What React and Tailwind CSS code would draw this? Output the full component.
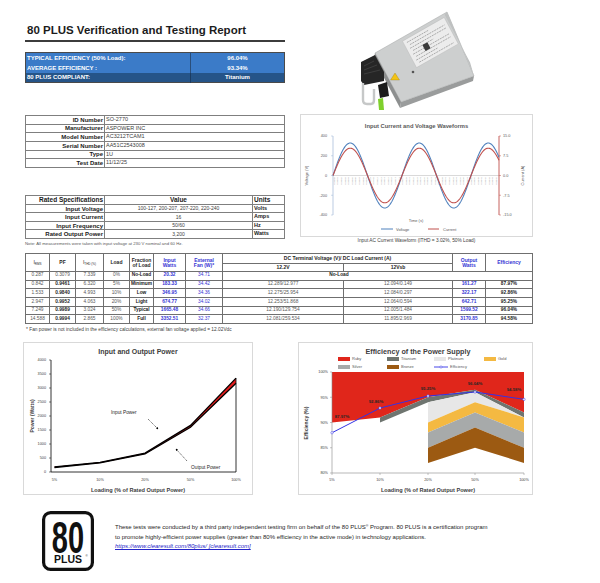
import React from "react";

const FONT = "Liberation Sans, Arial, sans-serif";

function sine(x0, x1, y0, amp, period) {
  const pts = [];
  for (let x = x0; x <= x1 + 0.01; x += 0.5) {
    const y = y0 - amp * Math.sin((2 * Math.PI * (x - x0)) / period);
    pts.push(`${x.toFixed(1)},${y.toFixed(2)}`);
  }
  return "M" + pts.join(" L");
}

// point on the PSU top face: corner + u along the length + v across the width
const face = (u, v) => [15 + u * 72 + v * 26, 43 - u * 41 + v * 49];
const fp = (u, v) => face(u, v).map((n) => n.toFixed(1)).join(",");

const PsuPicture = () => (
  <svg width="116" height="100" viewBox="0 0 116 100" className="block">
    <polygon points="41,92 114,66 113,71 40,98" fill="#9a9c9c" />
    <polygon points="15,43 87,2 114,66 41,92" fill="#cdcfcf" stroke="#a3a5a5" strokeWidth="0.5" />
    <polygon points={`${fp(0.96, 0.02)} 87,2 114,66 ${fp(0.96, 1)}`} fill="#bfc1c1" />
    <polygon points={`${fp(0.36, 0.06)} ${fp(0.94, 0.06)} ${fp(0.94, 0.6)} ${fp(0.36, 0.6)}`} fill="#ececec" stroke="#b3b3b3" strokeWidth="0.4" />
    {[0.12, 0.18, 0.24, 0.3, 0.36, 0.42, 0.48, 0.54].map((v, i) => (
      <line
        key={v}
        x1={face(i % 2 ? 0.42 : 0.4, v)[0]}
        y1={face(i % 2 ? 0.42 : 0.4, v)[1]}
        x2={face(i % 3 ? 0.9 : 0.7, v)[0]}
        y2={face(i % 3 ? 0.9 : 0.7, v)[1]}
        stroke="#8e8e8e"
        strokeWidth="0.7"
        strokeDasharray="2,0.8"
      />
    ))}
    <polygon points={`${fp(0.55, 0.3)} ${fp(0.62, 0.3)} ${fp(0.62, 0.42)} ${fp(0.55, 0.42)}`} fill="#3a3a3a" />
    <polygon points="15,43 41,92 40,98 14,49" fill="#8d8f8f" />
    <polygon points="1,52 15,45 24,62 24,71 4,75 1,71" fill="#262626" />
    <line x1="4" y1="56" x2="14" y2="51" stroke="#555" strokeWidth="0.5" />
    <line x1="4" y1="60" x2="17" y2="55" stroke="#555" strokeWidth="0.5" />
    <line x1="4" y1="64" x2="20" y2="60" stroke="#555" strokeWidth="0.5" />
    <path d="M3,73 L3,90 Q3,94 7,94 L11,94 Q14,94 14,90 L14,79" fill="none" stroke="#c6c8c8" strokeWidth="2.4" />
    <polygon points="18,75 27,72 29,86 20,88" fill="#1c1c1c" />
    <polygon points="18,89 23,88 24,100 19,100" fill="#7fd02c" />
    <polygon points="35,63 39.5,70 30.5,70" fill="#f3c316" stroke="#8a6d00" strokeWidth="0.3" />
    <circle cx="53" cy="62" r="1.3" fill="#555" />
  </svg>
);

const WaveChart = () => {
  const ticks = Array.from({ length: 46 }, (_, i) => 33.8 + i * 3.6);
  const left = ["400", "200", "0", "-200", "-400"];
  const right = ["15.0", "7.5", "0.0", "-7.5", "-15.0"];
  return (
    <svg width="231" height="121" className="block" fontFamily={FONT}>
      <text x="115.5" y="13" textAnchor="middle" fontSize="5.8" fontWeight="700" fill="#595959">
        Input Current and Voltage Waveforms
      </text>
      {left.map((t, i) => (
        <text key={t} x="26" y={21 + i * 19.75 + 1.4} textAnchor="end" fontSize="3.8" fill="#595959">{t}</text>
      ))}
      {right.map((t, i) => (
        <text key={t} x="202" y={21 + i * 19.75 + 1.4} fontSize="3.8" fill="#595959">{t}</text>
      ))}
      <text transform="translate(7,60.5) rotate(-90)" textAnchor="middle" fontSize="4" fill="#595959">Voltage (V)</text>
      <text transform="translate(223,60.5) rotate(-90)" textAnchor="middle" fontSize="4" fill="#595959">Current (A)</text>
      {ticks.map((t, i) => (
        <text key={i} transform={`translate(${t},62) rotate(-90)`} textAnchor="end" fontSize="2.5" fill="#a6a6a6">
          {`0.0${String(i).padStart(3, "0")}`}
        </text>
      ))}
      <line x1="32" y1="60.5" x2="198" y2="60.5" stroke="#bfbfbf" strokeWidth="0.6" />
      <line x1="32" y1="21" x2="32" y2="100" stroke="#9db6d6" strokeWidth="0.7" />
      <line x1="198" y1="21" x2="198" y2="100" stroke="#c0504d" strokeWidth="0.9" />
      {[0, 1, 2, 3, 4].map((i) => (
        <g key={i}>
          <line x1="30" y1={21 + i * 19.75} x2="32" y2={21 + i * 19.75} stroke="#9db6d6" strokeWidth="0.5" />
          <line x1="198" y1={21 + i * 19.75} x2="200" y2={21 + i * 19.75} stroke="#c0504d" strokeWidth="0.5" />
        </g>
      ))}
      <path d={sine(32, 198, 60.5, 32.5, 69)} fill="none" stroke="#4f81bd" strokeWidth="1.1" />
      <path d={sine(32, 198, 60.5, 27.3, 69)} fill="none" stroke="#c0504d" strokeWidth="1.1" />
      <text x="115" y="107" textAnchor="middle" fontSize="4" fill="#595959">Time (s)</text>
      <line x1="80" y1="114" x2="92" y2="114" stroke="#4f81bd" strokeWidth="1" />
      <text x="95" y="115.5" fontSize="4" fill="#595959">Voltage</text>
      <line x1="127" y1="114" x2="138" y2="114" stroke="#c0504d" strokeWidth="1" />
      <text x="142" y="115.5" fontSize="4" fill="#595959">Current</text>
    </svg>
  );
};

const PowerChart = () => {
  const xs = [30.5, 76, 121, 166.5, 212];
  const inp = [183.33, 346.95, 674.77, 1665.48, 3352.51];
  const out = [161.27, 322.17, 642.71, 1599.52, 3170.85];
  const y = (v) => 129 - v * 0.028;
  const line = (arr) => arr.map((v, i) => `${xs[i]},${y(v).toFixed(2)}`).join(" ");
  const band = line(inp) + " " + [...out].reverse().map((v, i) => `${xs[4 - i]},${y(v).toFixed(2)}`).join(" ");
  const yTicks = [0, 500, 1000, 1500, 2000, 2500, 3000, 3500, 4000];
  const labels = ["5%", "10%", "20%", "50%", "100%"];
  return (
    <svg width="228" height="151" className="block" fontFamily={FONT}>
      <defs>
        <marker id="ah" markerWidth="4" markerHeight="4" refX="3" refY="2" orient="auto">
          <path d="M0,0 L4,2 L0,4 z" fill="#000" />
        </marker>
      </defs>
      <text x="114" y="11" textAnchor="middle" fontSize="7" fontWeight="700" fill="#404040">Input and Output Power</text>
      {yTicks.map((v) => (
        <g key={v}>
          <text x="22" y={y(v) + 1.3} textAnchor="end" fontSize="3.8" fill="#404040">{v}</text>
          <line x1="25" y1={y(v)} x2="27" y2={y(v)} stroke="#000" strokeWidth="0.5" />
        </g>
      ))}
      {labels.map((l, i) => (
        <text key={l} x={xs[i]} y="137.5" textAnchor="middle" fontSize="3.8" fill="#404040">{l}</text>
      ))}
      <polygon points={band} fill="#e31d1d" />
      <polyline points={line(inp)} fill="none" stroke="#000" strokeWidth="1.3" />
      <polyline points={line(out)} fill="none" stroke="#000" strokeWidth="1.3" />
      <line x1="212" y1={y(3352.51)} x2="212" y2="129" stroke="#000" strokeWidth="0.8" />
      <line x1="27" y1="17" x2="27" y2="129" stroke="#000" strokeWidth="0.8" />
      <line x1="27" y1="129" x2="212" y2="129" stroke="#000" strokeWidth="0.8" />
      <text x="87" y="71" fontSize="4.8" fill="#262626">Input Power</text>
      <line x1="124" y1="76" x2="134" y2="86" stroke="#000" strokeWidth="0.6" strokeDasharray="1.2,0.8" markerEnd="url(#ah)" />
      <text x="167" y="126" fontSize="4.8" fill="#262626">Output Power</text>
      <line x1="163" y1="118" x2="152" y2="106" stroke="#000" strokeWidth="0.6" strokeDasharray="1.2,0.8" markerEnd="url(#ah)" />
      <text x="114" y="149" textAnchor="middle" fontSize="5.6" fontWeight="700" fill="#404040">
        Loading (% of Rated Output Power)
      </text>
      <text transform="translate(10,73) rotate(-90)" textAnchor="middle" fontSize="5" fontWeight="700" fill="#404040">
        Power (Watts)
      </text>
    </svg>
  );
};

const EffChart = () => {
  const xs = [33, 81, 129, 176, 225];
  const yOf = (p) => 130 - (p - 80) * 5.05;
  const poly = (top, bottom) =>
    [...top, ...[...bottom].reverse()].map(([i, p]) => `${xs[i]},${yOf(p).toFixed(2)}`).join(" ");
  const eff = [87.97, 92.86, 95.25, 96.04, 94.58];
  const effLabels = [
    ["87.97%", 43, 75],
    ["92.86%", 77, 60],
    ["95.25%", 129, 47],
    ["96.04%", 176, 42],
    ["94.58%", 215, 48],
  ];
  const legend = [
    ["Ruby", "#e0261b", 39, 16],
    ["Titanium", "#6f7570", 88, 16],
    ["Platinum", "#e7e7e7", 135, 16],
    ["Gold", "#f4b942", 185, 16],
    ["Silver", "#a7aaaa", 39, 24],
    ["Bronze", "#9c5a12", 88, 24],
  ];
  return (
    <svg width="233" height="151" className="block" fontFamily={FONT}>
      <text x="119" y="11" textAnchor="middle" fontSize="7.2" fontWeight="700" fill="#404040">
        Efficiency of the Power Supply
      </text>
      {legend.map(([n, c, x, y]) => (
        <g key={n}>
          <rect x={x} y={y - 2} width="12" height="4" fill={c} />
          <text x={x + 14} y={y + 1.4} fontSize="4" fill="#595959">{n}</text>
        </g>
      ))}
      <line x1="135" y1="24" x2="149" y2="24" stroke="#3333e6" strokeWidth="0.9" />
      <circle cx="142" cy="24" r="1.1" fill="#fff" stroke="#3333e6" strokeWidth="0.5" />
      <text x="151" y="25.4" fontSize="4" fill="#595959">Efficiency</text>

      <polygon
        points={poly([[0, 100], [1, 100], [2, 100], [3, 100], [4, 100]], [[0, 90], [1, 91], [2, 95], [3, 96.5], [4, 92]])}
        fill="#e0261b"
      />
      <polygon points={poly([[1, 91], [2, 95], [3, 96.5], [4, 92]], [[1, 90], [2, 94], [3, 96], [4, 91]])} fill="#6f7570" />
      <polygon points={poly([[2, 94], [3, 96], [4, 91]], [[2, 90], [3, 94], [4, 91]])} fill="#e7e7e7" />
      <polygon points={poly([[2, 90], [3, 94], [4, 91]], [[2, 88], [3, 92], [4, 88]])} fill="#f4b942" />
      <polygon points={poly([[2, 88], [3, 92], [4, 88]], [[2, 85], [3, 89], [4, 85]])} fill="#a7aaaa" />
      <polygon points={poly([[2, 85], [3, 89], [4, 85]], [[2, 82], [3, 85], [4, 82]])} fill="#9c5a12" />

      {[100, 95, 90, 85, 80].map((p) => (
        <g key={p}>
          <text x="29" y={yOf(p) + 1.3} textAnchor="end" fontSize="3.8" fill="#404040">{p}%</text>
          <line x1="31" y1={yOf(p)} x2="33" y2={yOf(p)} stroke="#868686" strokeWidth="0.5" />
        </g>
      ))}
      <line x1="33" y1="29" x2="33" y2="130" stroke="#868686" strokeWidth="0.6" />
      <line x1="33" y1="130" x2="225" y2="130" stroke="#868686" strokeWidth="0.6" />
      {["5%", "10%", "20%", "50%", "100%"].map((l, i) => (
        <g key={l}>
          <line x1={xs[i]} y1="130" x2={xs[i]} y2="132" stroke="#868686" strokeWidth="0.5" />
          <text x={xs[i]} y="138" textAnchor="middle" fontSize="3.8" fill="#404040">{l}</text>
        </g>
      ))}
      <polyline points={eff.map((p, i) => `${xs[i]},${yOf(p).toFixed(2)}`).join(" ")} fill="none" stroke="#3333e6" strokeWidth="1" />
      {eff.map((p, i) => (
        <circle key={i} cx={xs[i]} cy={yOf(p)} r="1.2" fill="#fff" stroke="#3333e6" strokeWidth="0.5" />
      ))}
      {effLabels.map(([t, x, y]) => (
        <text key={t} x={x} y={y} textAnchor="middle" fontSize="4.3" fontWeight="700" fill="#262626">{t}</text>
      ))}
      <text x="129" y="149" textAnchor="middle" fontSize="5.6" fontWeight="700" fill="#404040">
        Loading (% of Rated Output Power)
      </text>
      <text transform="translate(9,80) rotate(-90)" textAnchor="middle" fontSize="5" fontWeight="700" fill="#404040">
        Efficiency (%)
      </text>
    </svg>
  );
};

const Logo80 = () => (
  <svg width="52" height="60" viewBox="0 0 52 60" className="block" fontFamily={FONT}>
    <rect x="1.6" y="1.6" width="48.8" height="56.8" rx="7" fill="#fff" stroke="#111" strokeWidth="3.2" />
    <text transform="translate(26,42) scale(0.66,1)" textAnchor="middle" fontSize="44" fontWeight="700" fill="#111">80</text>
    <text x="26" y="52" textAnchor="middle" fontSize="10.5" fontWeight="700" fill="#111">PLUS</text>
    <text x="43.5" y="45.5" fontSize="3" fill="#111">®</text>
  </svg>
);

const idRows = [
  ["ID Number", "SO-2770"],
  ["Manufacturer", "ASPOWER INC"],
  ["Model Number", "AC3212TCAM1"],
  ["Serial Number", "AA51C2543008"],
  ["Type", "1U"],
  ["Test Date", "11/12/25"],
];

const specRows = [
  ["Input Voltage", "100-127, 200-207, 207-220, 220-240", "Volts"],
  ["Input Current", "16", "Amps"],
  ["Input Frequency", "50/60", "Hz"],
  ["Rated Output Power", "3,200", "Watts"],
];

const dataRows = [
  ["0.842", "0.9461", "6.320", "5%", "Minimum", "183.33", "34.42", "12.289/12.977", "12.094/0.149", "161.27", "87.97%"],
  ["1.533", "0.9840", "4.993", "10%", "Low", "346.95", "34.36", "12.275/25.954", "12.084/0.297", "322.17", "92.86%"],
  ["2.947", "0.9952", "4.063", "20%", "Light", "674.77", "34.02", "12.253/51.868", "12.064/0.594", "642.71", "95.25%"],
  ["7.249", "0.9989", "3.024", "50%", "Typical", "1665.48", "34.66", "12.190/129.754", "12.005/1.484", "1599.52", "96.04%"],
  ["14.588", "0.9994", "2.865", "100%", "Full", "3352.51", "32.37", "12.081/259.534", "11.895/2.969", "3170.85", "94.58%"],
];

const td = "border border-[#6f6f6f] leading-none text-center px-[1px]";

export default function App() {
  return (
    <div className="w-[600px] h-[583px] overflow-hidden bg-white text-black font-['Liberation_Sans',Arial,sans-serif]">
      {/* header */}
      <div className="flex h-[112px]">
        <div className="ml-[25px] w-[260px] pt-[23px]">
          <h1 className="pl-[2px] text-[11.5px] font-bold leading-[14px] text-[#1c1c1c]">
            80 PLUS Verification and Testing Report
          </h1>
          <div className="mt-[3px] h-[2px] bg-[#3c3c3c]" />
          <table className="mt-[10px] w-full table-fixed border-collapse border border-[#4a4a4a] text-[6px] font-bold text-white">
            <colgroup>
              <col className="w-[165px]" />
              <col />
            </colgroup>
            <tbody>
              <tr className="h-[10px] bg-[#3b7bc8]">
                <td className="leading-none pl-[1px]">TYPICAL EFFICIENCY (50% Load):</td>
                <td className="border-l border-[#2a4e7a] text-center leading-none">96.04%</td>
              </tr>
              <tr className="h-[10px] bg-[#3b7bc8]">
                <td className="leading-none pl-[1px]">AVERAGE EFFICIENCY :</td>
                <td className="border-l border-[#2a4e7a] text-center leading-none">93.34%</td>
              </tr>
              <tr className="h-[10px] bg-[#255488]">
                <td className="leading-none pl-[1px]">80 PLUS COMPLIANT:</td>
                <td className="border-l border-[#1c3c62] text-center leading-none">Titanium</td>
              </tr>
            </tbody>
          </table>
        </div>
        <div className="ml-[75px] mt-[10px]">
          <PsuPicture />
        </div>
      </div>

      {/* product info + waveform */}
      <div className="flex h-[141px]">
        <div className="ml-[25px] w-[260px]">
          <table className="mt-[3px] w-full table-fixed border-collapse">
            <colgroup>
              <col className="w-[79px]" />
              <col />
            </colgroup>
            <tbody>
              {idRows.map(([k, v]) => (
                <tr key={k} className="h-[8.67px]">
                  <td className="border border-[#7f7f7f] pr-[1px] text-right text-[6px] font-bold leading-none text-[#1a1a1a]">{k}</td>
                  <td className="border border-[#7f7f7f] pl-[1px] text-[5.5px] leading-none text-[#404040]">{v}</td>
                </tr>
              ))}
            </tbody>
          </table>
          <table className="mt-[27px] w-full table-fixed border-collapse">
            <colgroup>
              <col className="w-[79px]" />
              <col className="w-[148px]" />
              <col />
            </colgroup>
            <tbody>
              <tr className="h-[9px] text-[6.5px] font-bold text-[#1a1a1a]">
                <td className="border border-[#7f7f7f] pr-[1px] text-right leading-none">Rated Specifications</td>
                <td className="border border-[#7f7f7f] text-center leading-none">Value</td>
                <td className="border border-[#7f7f7f] pl-[1px] leading-none">Units</td>
              </tr>
              {specRows.map(([k, v, u]) => (
                <tr key={k} className="h-[8.5px]">
                  <td className="border border-[#7f7f7f] pr-[1px] text-right text-[6px] font-bold leading-none text-[#1a1a1a]">{k}</td>
                  <td className="border border-[#7f7f7f] text-center text-[5px] leading-none text-[#404040]">{v}</td>
                  <td className="border border-[#7f7f7f] pl-[1px] text-[5.5px] font-bold leading-none text-[#1a1a1a]">{u}</td>
                </tr>
              ))}
            </tbody>
          </table>
          <p className="mt-[2px] text-[4.3px] leading-[6px] text-[#595959]">
            Note: All measurements were taken with input voltage at 230 V nominal and 60 Hz.
          </p>
        </div>
        <div className="ml-[15px] mt-[2px] w-[233px]">
          <div className="h-[123px] w-[233px] border border-[#d9d9d9]">
            <WaveChart />
          </div>
          <p className="mt-[1px] text-center text-[4.8px] leading-[6px] text-[#404040]">
            Input AC Current Waveform (ITHD = 3.02%, 50% Load)
          </p>
        </div>
      </div>

      {/* test data */}
      <div className="ml-[25px] h-[89px] w-[508px]">
        <table className="w-full table-fixed border-collapse border border-[#4d4d4d]">
          <colgroup>
            <col className="w-[24px]" />
            <col className="w-[26px]" />
            <col className="w-[28px]" />
            <col className="w-[26px]" />
            <col className="w-[24px]" />
            <col className="w-[32px]" />
            <col className="w-[37px]" />
            <col className="w-[121px]" />
            <col className="w-[109px]" />
            <col className="w-[33px]" />
            <col />
          </colgroup>
          <thead>
            <tr className="h-[10px] text-[5px] font-bold text-[#262626]">
              <th rowSpan={2} className={`${td} font-normal`}>
                I<sub className="text-[3px]">RMS</sub>
              </th>
              <th rowSpan={2} className={td}>PF</th>
              <th rowSpan={2} className={`${td} font-normal`}>
                I<sub className="text-[3px]">THD (%)</sub>
              </th>
              <th rowSpan={2} className={td}>Load</th>
              <th rowSpan={2} className={`${td} leading-[7px]`}>
                Fraction<br />of Load
              </th>
              <th rowSpan={2} className={`${td} leading-[7px] text-[#3535d4]`}>
                Input<br />Watts
              </th>
              <th rowSpan={2} className={`${td} leading-[7px] text-[#3535d4]`}>
                External<br />Fan (W)*
              </th>
              <th colSpan={2} className={td}>DC Terminal Voltage (V)/ DC Load Current (A)</th>
              <th rowSpan={2} className={`${td} leading-[7px] text-[#3535d4]`}>
                Output<br />Watts
              </th>
              <th rowSpan={2} className={`${td} text-[#3535d4]`}>Efficiency</th>
            </tr>
            <tr className="h-[8px] text-[5px] font-bold text-[#262626]">
              <th className={td}>12.2V</th>
              <th className={td}>12Vsb</th>
            </tr>
          </thead>
          <tbody className="text-[4.8px]">
            <tr className="h-[8.7px]">
              <td className={`${td} text-[#595959]`}>0.287</td>
              <td className={`${td} text-[#595959]`}>0.3079</td>
              <td className={`${td} text-[#595959]`}>7.339</td>
              <td className={`${td} text-[#595959]`}>0%</td>
              <td className={`${td} font-bold text-[#1a1a1a]`}>No-Load</td>
              <td className={`${td} font-bold text-[#3535d4]`}>20.32</td>
              <td className={`${td} text-[#3535d4]`}>34.71</td>
              <td colSpan={4} className={`${td} font-bold text-[#1a1a1a]`}>
                <div className="w-[230px] text-center">No-Load</div>
              </td>
            </tr>
            {dataRows.map((r) => (
              <tr key={r[3]} className="h-[8.7px]">
                <td className={`${td} text-[#595959]`}>{r[0]}</td>
                <td className={`${td} font-bold text-[#262626]`}>{r[1]}</td>
                <td className={`${td} text-[#595959]`}>{r[2]}</td>
                <td className={`${td} text-[#595959]`}>{r[3]}</td>
                <td className={`${td} font-bold text-[#1a1a1a]`}>{r[4]}</td>
                <td className={`${td} font-bold text-[#3535d4]`}>{r[5]}</td>
                <td className={`${td} text-[#3535d4]`}>{r[6]}</td>
                <td className={`${td} text-[#595959]`}>{r[7]}</td>
                <td className={`${td} text-[#595959]`}>{r[8]}</td>
                <td className={`${td} font-bold text-[#3535d4]`}>{r[9]}</td>
                <td className={`${td} font-bold text-[#1a1a1a]`}>{r[10]}</td>
              </tr>
            ))}
          </tbody>
        </table>
        <p className="mt-[3px] pl-[1px] text-[4.8px] leading-[6px] text-[#404040]">
          * Fan power is not included in the efficiency calculations, external fan voltage applied = 12.02Vdc
        </p>
      </div>

      {/* charts */}
      <div className="ml-[23px] flex h-[153px]">
        <div className="h-[153px] w-[230px] border border-[#d9d9d9]">
          <PowerChart />
        </div>
        <div className="ml-[45px] h-[153px] w-[235px] border border-[#d9d9d9]">
          <EffChart />
        </div>
      </div>

      {/* footer */}
      <div className="ml-[42px] flex pt-[16px]">
        <Logo80 />
        <div className="ml-[21px] mt-[12px] text-[6px] leading-[9.5px] text-[#262626]">
          <p>
            These tests were conducted by a third party independent testing firm on behalf of the 80 PLUS
            <sup className="text-[3.5px]">®</sup> Program. 80 PLUS is a certification program
            <br />
            to promote highly-efficient power supplies (greater than 80% efficiency in the active mode) in technology applications.
          </p>
          <p className="italic text-[#2424c8] underline">https://www.clearesult.com/80plus/ [clearesult.com]</p>
        </div>
      </div>
    </div>
  );
}
